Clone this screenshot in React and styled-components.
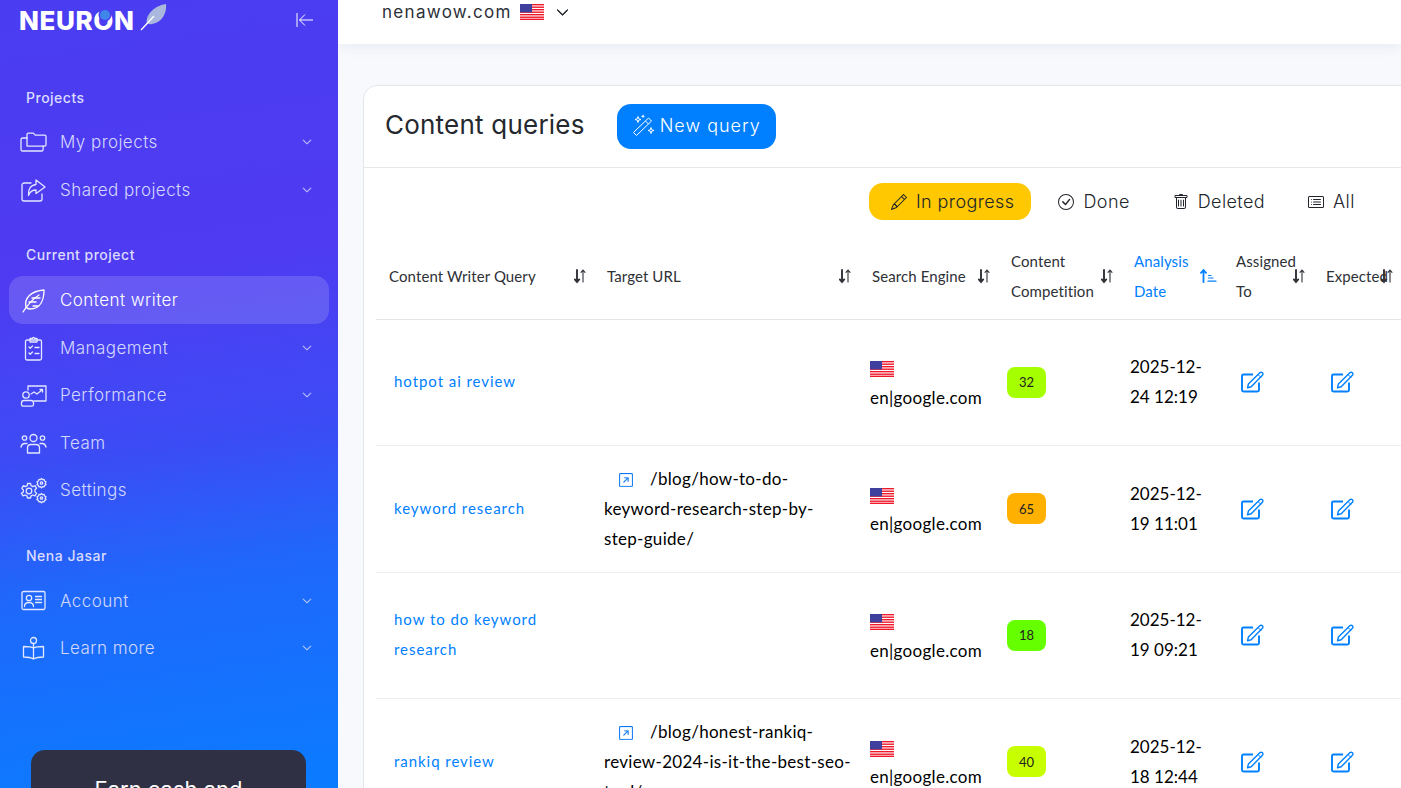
import React from "react";
import styled, { createGlobalStyle } from "styled-components";
import { BsChevronDown, BsPencil, BsCheckCircle, BsTrash, BsCardList, BsArrowUpRightSquare } from "react-icons/bs";

const GlobalStyle = createGlobalStyle`
  html, body { margin: 0; padding: 0; height: 100%; overflow: hidden; }
  body { font-family: "Inter", "Liberation Sans", sans-serif; background: #f7f9fd; }
  * { box-sizing: border-box; }
`;

const Page = styled.div`
  display: flex;
  height: 100vh;
  overflow: hidden;
`;

const Sidebar = styled.aside`
  width: 338px;
  flex: none;
  display: flex;
  flex-direction: column;
  padding: 0 9px;
  background: linear-gradient(172deg, #4a3df1 0%, #4f3bf1 34%, #3c4cf5 56%, #1f68fb 72%, #0a7cff 100%);
  overflow: hidden;
`;

const LogoRow = styled.div`
  display: flex;
  align-items: center;
  justify-content: space-between;
  height: 40px;
  padding: 0 15px 0 10px;
  color: #fff;
`;

const Logo = styled.div`
  display: flex;
  align-items: center;
  gap: 5px;
`;

const LogoText = styled.span`
  font-family: "Inter", sans-serif;
  font-weight: 800;
  font-size: 26px;
  letter-spacing: 0.6px;
  color: #fff;
`;

const LogoO = styled.span`
  position: relative;
  &::after {
    content: "";
    position: absolute;
    left: 7px;
    top: 5px;
    width: 10px;
    height: 10px;
    border-radius: 50%;
    background: #3f86ea;
    box-shadow: 0 0 0 1.5px #4a3df1;
  }
`;

const LogoFeather = styled.svg`
  width: 27px;
  height: 28px;
  margin-top: -6px;
`;

const CollapseIcon = styled.svg`
  width: 18px;
  height: 16px;
  fill: none;
  stroke: #fff;
  stroke-width: 1;
`;

const SectionLabel = styled.div`
  padding-left: 17px;
  margin-top: ${(p) => p.$top}px;
  height: 20px;
  line-height: 20px;
  font-size: 14px;
  font-weight: 500;
  letter-spacing: 0.5px;
  color: #dbdcfd;
`;

const NavRow = styled.div`
  display: flex;
  align-items: center;
  flex: none;
  height: 48px;
  margin-top: ${(p) => p.$top || 0}px;
  padding: 0 17px 0 11px;
  border-radius: 14px;
  color: ${(p) => (p.$active ? "#fff" : "#d3d8fd")};
  background: ${(p) => (p.$active ? "rgba(255, 255, 255, 0.15)" : "transparent")};
`;

const NavIcon = styled.svg`
  width: 27px;
  height: 27px;
  flex: none;
  fill: none;
  stroke: ${(p) => (p.$active ? "#fff" : "#e3e7ff")};
  stroke-width: 1.3;
  stroke-linecap: round;
  stroke-linejoin: round;
`;

const NavLabel = styled.span`
  flex: 1;
  margin-left: 13px;
  font-size: 17px;
  font-weight: 300;
  letter-spacing: 0.45px;
  line-height: 48px;
  height: 48px;
`;

const NavChevron = styled(BsChevronDown)`
  font-size: 10px;
  stroke-width: 0.7;
`;

const Promo = styled.div`
  margin: auto 23px 0 22px;
  height: 38px;
  flex: none;
  padding-top: 27px;
  border-radius: 14px 14px 0 0;
  background: #2f3044;
  color: #fff;
  font-size: 22px;
  text-align: center;
  line-height: 24px;
  overflow: hidden;
`;

const Main = styled.main`
  flex: 1;
  min-width: 0;
  overflow: hidden;
`;

const TopBar = styled.header`
  height: 44px;
  display: flex;
  align-items: flex-start;
  padding-left: 44px;
  background: #fff;
  box-shadow: 0 3px 14px rgba(40, 60, 110, 0.07);
  color: #2b2f36;
`;

const SiteName = styled.span`
  font-size: 17px;
  line-height: 24px;
  letter-spacing: 1.3px;
`;

const TopFlag = styled.span`
  display: flex;
  margin: 4px 0 0 8px;
`;

const TopChevron = styled(BsChevronDown)`
  margin: 6px 0 0 12px;
  font-size: 13px;
  stroke-width: 1.2;
`;

const Card = styled.section`
  margin: 41px 0 0 25px;
  width: 1100px;
  background: #fff;
  border: 1px solid #e3e6ea;
  border-radius: 14px 0 0 0;
`;

const CardHeader = styled.div`
  display: flex;
  align-items: center;
  height: 82px;
  padding-left: 21px;
  border-bottom: 1px solid #e6e8eb;
`;

const Title = styled.h1`
  margin: -3px 0 0;
  font-size: 26px;
  line-height: 32px;
  font-weight: 400;
  letter-spacing: 0.22px;
  color: #25282e;
`;

const NewButton = styled.button`
  display: flex;
  align-items: center;
  gap: 5px;
  height: 45px;
  width: 159px;
  margin-left: 32px;
  padding: 0 0 2px 15px;
  border: none;
  border-radius: 14px;
  background: #0080ff;
  color: #fff;
  font-family: inherit;
  font-size: 18px;
  font-weight: 300;
  letter-spacing: 1px;
`;

const WandIcon = styled.svg`
  width: 23px;
  height: 23px;
  flex: none;
  fill: none;
  stroke: #fff;
  stroke-width: 1;
  stroke-linejoin: round;
`;

const Tabs = styled.div`
  display: flex;
  gap: 5px;
  margin: 15px 0 13px 505px;
`;

const Tab = styled.div`
  display: flex;
  align-items: center;
  height: 37px;
  padding: 0 ${(p) => (p.$active ? 17 : 16)}px 0 22px;
  gap: 9px;
  border-radius: 14px;
  background: ${(p) => (p.$active ? "#ffc800" : "transparent")};
  font-size: 18px;
  font-weight: 300;
  letter-spacing: 0.4px;
  color: #22252b;
  svg { font-size: 16px; flex: none; }
`;

const Table = styled.table`
  width: 1025px;
  margin-left: 12px;
  table-layout: fixed;
  border-collapse: collapse;
  font-family: "Lato", sans-serif;
`;

const HeadCell = styled.th`
  position: relative;
  height: 86px;
  padding: 0 26px 0 13px;
  border-bottom: 1px solid #e3e5e8;
  text-align: left;
  font-size: 15px;
  font-weight: 400;
  letter-spacing: 0.1px;
  line-height: 30px;
  color: ${(p) => (p.$active ? "#0080ff" : "#2e3136")};
  white-space: ${(p) => (p.$nowrap ? "nowrap" : "normal")};
`;

const SortIcon = styled.span`
  position: absolute;
  right: ${(p) => (p.$active ? 6 : 8)}px;
  top: 50%;
  margin-top: -9px;
  display: flex;
  color: ${(p) => (p.$active ? "#0080ff" : "#2e3136")};
`;

const Row = styled.tr`
  height: 126.5px;
  border-bottom: 1px solid #ebedef;
`;

const Cell = styled.td`
  padding: 0 6px 0 ${(p) => p.$pad || 0}px;
  vertical-align: middle;
  font-size: 17px;
  line-height: 30px;
  color: #000;
`;

const QueryLink = styled.a`
  display: block;
  padding-bottom: 2px;
  font-size: 15px;
  letter-spacing: 0.95px;
  color: #0080ff;
`;

const UrlText = styled.span`
  letter-spacing: 0.3px;
`;

const UrlIcon = styled(BsArrowUpRightSquare)`
  display: inline-block;
  margin: 0 17px 0 15px;
  font-size: 14px;
  color: #0a78f5;
  stroke-width: 0.3;
  vertical-align: -2px;
`;

const FlagLine = styled.div`
  display: flex;
  height: 30px;
  padding-top: 5px;
  align-items: center;
`;

const EngineName = styled.div`
  letter-spacing: 0.3px;
  padding-top: 1px;
`;

const Badge = styled.span`
  display: flex;
  align-items: center;
  justify-content: center;
  width: 39px;
  height: 31px;
  border-radius: 8px;
  font-size: 13px;
  color: #222;
  background: ${(p) => p.$color};
`;

const EditSvg = styled.svg`
  display: block;
  width: 24px;
  height: 22px;
  fill: none;
  stroke: #0080ff;
`;

const Flag = () => (
  <svg width="24" height="16" viewBox="0 0 24 16">
    <rect width="24" height="16" fill="#fff" />
    {[0, 2.5, 5, 7.5, 10, 12.5].map((y) => (
      <rect key={y} y={y} width="24" height="1.4" fill="#f0192c" />
    ))}
    <rect y="14.6" width="24" height="1.4" fill="#f0192c" />
    <rect width="12" height="8.4" fill="#3f3f9e" />
  </svg>
);

const Sort = () => (
  <svg width="12" height="18" viewBox="0 0 12 18" fill="none" stroke="currentColor" strokeLinecap="round">
    <path d="M3 3v12M.8 12.4 3 15l2.200-2.600" strokeWidth="1.9" />
    <path d="M9 15V3M7 5.400 9 3l2 2.400" strokeWidth="1.100" />
  </svg>
);

const SortActive = () => (
  <svg width="17" height="18" viewBox="0 0 17 18" fill="none" stroke="currentColor" strokeLinecap="round">
    <path d="M3.500 15V3M1 5.800 3.500 3 6 5.800" strokeWidth="1.800" />
    <path d="M8.500 8.500h2.500M8.500 11h4.500M8 14.200h8" strokeWidth="1.200" />
  </svg>
);

const EditIcon = () => (
  <EditSvg viewBox="0 0 24 22">
    <path d="M12 3.500H2.500A1.500 1.500 0 0 0 1 5v14c0 .8.700 1.500 1.500 1.500h14c.8 0 1.500-.7 1.500-1.500v-7.500" strokeWidth="1.900" />
    <path d="M6.500 16.800 7.400 13 18.800 1.800c.8-.7 1.900-.7 2.600 0 .7.700.7 1.800 0 2.500L10.200 15.800Z" strokeWidth="1.400" strokeLinejoin="round" />
    <path d="M17 3.500 20 6.500" strokeWidth="1" />
  </EditSvg>
);

const icons = {
  folder: (
    <>
      <path d="M7 17V5.500c0-.8.600-1.400 1.400-1.400h5l1.800 2h9.400c.8 0 1.400.6 1.400 1.400v8.200c0 .8-.6 1.400-1.400 1.400H7Z" />
      <path d="M7 9H2.600C1.700 9 1 9.700 1 10.600v9.800C1 21.300 1.700 22 2.600 22h19c.9 0 1.500-.7 1.500-1.600V17" />
    </>
  ),
  share: (
    <>
      <path d="M11 6H4C3 6 2 7 2 8v14c0 1 1 2 2 2h16c1 0 2-1 2-2v-5" />
      <path d="M16 3 25 10l-9 6.500V13c-4 0-6 1.500-7.500 5.500-.5-6 2-10.500 7.500-11Z" />
    </>
  ),
  feather: (
    <>
      <path d="M3 25C8 17 13 12 19 8" />
      <path d="M6 20C4 11 11 4 24 3c0 9-3 19-14 19-1.500 0-3-.7-4-2Z" />
      <path d="M9 15h7M12 11h8M13 19h5" />
    </>
  ),
  clipboard: (
    <>
      <rect x="5.500" y="5" width="16" height="20" rx="1.500" />
      <path d="M10 5V3.500h2.500a1 1 0 0 1 2 0H17V7h-7ZM9 12l1.200 1.200L12.500 11M15 12.500h4M9 18l1.200 1.200 2.300-2.200M15 18.500h4" />
    </>
  ),
  performance: (
    <>
      <path d="M8 8V4h18v15H14" />
      <circle cx="6" cy="13" r="3.200" />
      <path d="M1.500 21c0-1.500 1-2.500 2.500-2.500h7c1.500 0 2.500 1 2.500 2.500v1.500c0 1-.8 1.700-1.700 1.700H3.200c-1 0-1.700-.7-1.700-1.700ZM11 12l3-2 3 2 5-4M20 7.500h2.500V10" />
    </>
  ),
  team: (
    <>
      <circle cx="13.500" cy="8" r="3.500" />
      <circle cx="4.500" cy="8" r="2.200" />
      <circle cx="22.500" cy="8" r="2.200" />
      <path d="M7.500 23v-5c0-2 1.500-3.500 3.500-3.500h5c2 0 3.500 1.500 3.500 3.500v5ZM1 17c.5-2 2-3.500 3.500-3.500H7M26 17c-.5-2-2-3.500-3.500-3.500H20" />
    </>
  ),
  settings: (
    <>
      <circle cx="9" cy="14" r="2.800" />
      <path d="M7.500 6.500h3l.6 2.200 1.800.9 2-.9 1.700 2.500-1.600 1.600v2l1.600 1.600-1.700 2.500-2-.9-1.800.9-.6 2.100h-3l-.6-2.100-1.800-.9-2 .9-1.700-2.500L3.400 15v-2l-1.600-1.600L3.500 8.700l2 .9 1.800-.9Z" />
      <path d="M21.500 1.500l1 1.200 1.600-.2.500 1.500 1.400.8-.7 1.400.7 1.400-1.400.8-.5 1.500-1.600-.2-1 1.200-1-1.200-1.600.2-.5-1.500-1.400-.8.7-1.400-.7-1.400 1.400-.8.500-1.500 1.600.2Z" />
      <path d="M21.500 16.500l1 1.200 1.600-.2.500 1.500 1.400.8-.7 1.400.7 1.400-1.400.8-.5 1.500-1.600-.2-1 1.200-1-1.200-1.600.2-.5-1.500-1.400-.8.7-1.400-.7-1.400 1.400-.8.500-1.500 1.600.2Z" />
      <circle cx="21.500" cy="6" r="1.200" />
      <circle cx="21.500" cy="21" r="1.200" />
    </>
  ),
  account: (
    <>
      <rect x="2" y="3.500" width="23" height="18" rx="1.500" />
      <circle cx="9" cy="10" r="2.700" />
      <path d="M4.500 18.500c0-2.500 2-4 4.500-4s4.500 1.500 4.500 4M15.500 8.500h6M15.500 11.500h6M15.500 14.500h6" />
    </>
  ),
  learn: (
    <>
      <circle cx="13.500" cy="5.500" r="3" />
      <path d="M13.500 8.500V24M13.500 13c-2.500-1.500-6-1.500-10-1.500V22c4 0 7.500.5 10 2 2.500-1.500 6-2 10-2V11.500c-4 0-7.500 0-10 1.500Z" />
    </>
  ),
};

const NavItem = ({ icon, label, chevron, active, top }) => (
  <NavRow $active={active} $top={top}>
    <NavIcon viewBox="0 0 27 27" $active={active}>
      {icons[icon]}
    </NavIcon>
    <NavLabel>{label}</NavLabel>
    {chevron && <NavChevron />}
  </NavRow>
);

const columns = [
  { w: 218, label: "Content Writer Query", nowrap: true },
  { w: 265, label: "Target URL" },
  { w: 139, label: "Search Engine", nowrap: true },
  { w: 123, label: "Content Competition" },
  { w: 102, label: "Analysis Date", active: true },
  { w: 90, label: "Assigned To" },
  { w: 88, label: "Expected", nowrap: true },
];

const rows = [
  { query: "hotpot ai review", date: ["2025-12-", "24 12:19"], score: 32, color: "#a6ff00" },
  {
    query: "keyword research",
    url: "/blog/how-to-do-keyword-research-step-by-step-guide/",
    date: ["2025-12-", "19 11:01"],
    score: 65,
    color: "#ffb000",
  },
  { query: "how to do keyword research", date: ["2025-12-", "19 09:21"], score: 18, color: "#66ff00" },
  {
    query: "rankiq review",
    url: "/blog/honest-rankiq-review-2024-is-it-the-best-seo-tool/",
    date: ["2025-12-", "18 12:44"],
    score: 40,
    color: "#c8ff00",
  },
];

export default function App() {
  return (
    <Page>
      <GlobalStyle />
      <Sidebar>
        <LogoRow>
          <Logo>
            <LogoText>
              NEUR<LogoO>O</LogoO>N
            </LogoText>
            <LogoFeather viewBox="0 0 27 28">
              <path d="M1 27C3 25 5 23 7 21 5 13 13 3 26 1c1 8-3 18-14 20-1.500.3-3 .2-4-.3Z" fill="#a9b8dc" />
              <path d="M1 27 14 13" stroke="#fff" strokeWidth="1.300" fill="none" />
            </LogoFeather>
          </Logo>
          <CollapseIcon viewBox="0 0 18 16">
            <path d="M1 1v14M17 8H3.500M9 2.500 3.500 8 9 13.500" />
          </CollapseIcon>
        </LogoRow>

        <SectionLabel $top={48}>Projects</SectionLabel>
        <NavItem icon="folder" label="My projects" chevron top={10} />
        <NavItem icon="share" label="Shared projects" chevron />

        <SectionLabel $top={31}>Current project</SectionLabel>
        <NavItem icon="feather" label="Content writer" active top={11} />
        <NavItem icon="clipboard" label="Management" chevron />
        <NavItem icon="performance" label="Performance" chevron top={-1} />
        <NavItem icon="team" label="Team" />
        <NavItem icon="settings" label="Settings" top={-1} />

        <SectionLabel $top={32}>Nena Jasar</SectionLabel>
        <NavItem icon="account" label="Account" chevron top={11} />
        <NavItem icon="learn" label="Learn more" chevron top={-1} />

        <Promo>Earn cash and</Promo>
      </Sidebar>

      <Main>
        <TopBar>
          <SiteName>nenawow.com</SiteName>
          <TopFlag>
            <Flag />
          </TopFlag>
          <TopChevron />
        </TopBar>

        <Card>
          <CardHeader>
            <Title>Content queries</Title>
            <NewButton>
              <WandIcon viewBox="0 0 23 23">
                <path d="M1.500 18.500 16.500 4l3 3-15 14.500Z" />
                <path d="M13.500 7 16.500 10" />
                <path d="M6 2.500 6.700 4.800 9 5.500 6.700 6.200 6 8.500 5.300 6.200 3 5.500 5.300 4.800Z" />
                <path d="M11 .8v3M9.500 2.300h3" />
                <path d="M19 13.500 19.700 15.800 22 16.500 19.700 17.200 19 19.500 18.300 17.200 16 16.500 18.300 15.800Z" />
              </WandIcon>
              New query
            </NewButton>
          </CardHeader>

          <Tabs>
            <Tab $active>
              <BsPencil />
              In progress
            </Tab>
            <Tab>
              <BsCheckCircle />
              Done
            </Tab>
            <Tab>
              <BsTrash />
              Deleted
            </Tab>
            <Tab>
              <BsCardList />
              All
            </Tab>
          </Tabs>

          <Table>
            <colgroup>
              {columns.map((c) => (
                <col key={c.label} width={c.w} />
              ))}
            </colgroup>
            <thead>
              <tr>
                {columns.map((c) => (
                  <HeadCell key={c.label} $active={c.active} $nowrap={c.nowrap}>
                    {c.label}
                    <SortIcon $active={c.active}>{c.active ? <SortActive /> : <Sort />}</SortIcon>
                  </HeadCell>
                ))}
              </tr>
            </thead>
            <tbody>
              {rows.map((r) => (
                <Row key={r.query}>
                  <Cell $pad={18}>
                    <QueryLink>{r.query}</QueryLink>
                  </Cell>
                  <Cell $pad={10}>
                    {r.url && (
                      <UrlText>
                        <UrlIcon />
                        {r.url}
                      </UrlText>
                    )}
                  </Cell>
                  <Cell $pad={11}>
                    <FlagLine>
                      <Flag />
                    </FlagLine>
                    <EngineName>en|google.com</EngineName>
                  </Cell>
                  <Cell $pad={9}>
                    <Badge $color={r.color}>{r.score}</Badge>
                  </Cell>
                  <Cell $pad={9}>
                    {r.date[0]}
                    <br />
                    {r.date[1]}
                  </Cell>
                  <Cell $pad={18}>
                    <EditIcon />
                  </Cell>
                  <Cell $pad={18}>
                    <EditIcon />
                  </Cell>
                </Row>
              ))}
            </tbody>
          </Table>
        </Card>
      </Main>
    </Page>
  );
}
